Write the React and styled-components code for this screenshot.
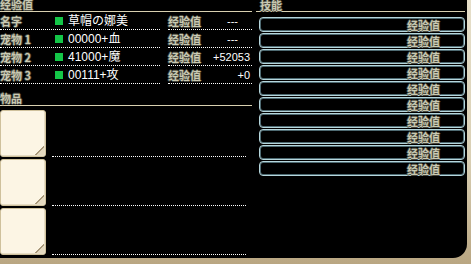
import styled, { createGlobalStyle } from "styled-components";

const GlobalStyle = createGlobalStyle`
  html, body {
    margin: 0;
    padding: 0;
    background: #000;
  }
  body {
    width: 471px;
    height: 264px;
    overflow: hidden;
  }
`;

const Frame = styled.div`
  width: 471px;
  height: 264px;
  box-sizing: border-box;
  padding: 0 4px 6px 0;
  background: linear-gradient(to bottom, #e6dfca 0%, #d9cfb4 60%, #b9a682 100%);
`;

const Panel = styled.div`
  height: 100%;
  background: #000;
  border-bottom-right-radius: 14px;
  display: grid;
  grid-template-columns: 252px 209px;
  column-gap: 4px;
  overflow: hidden;
`;

const Column = styled.div`
  display: flex;
  flex-direction: column;
`;

const labelFont = `
  font-family: "Noto Sans CJK SC", "Noto Sans", sans-serif;
  font-weight: bold;
  font-size: 11px;
  color: #c9c9b2;
  text-shadow: 1px 0 #45453c, -1px 0 #45453c, 0 1px #45453c, 0 -1px #45453c;
`;

const SectionHeader = styled.div`
  ${labelFont}
  box-sizing: border-box;
  height: ${(p) => p.$h || 12}px;
  padding-left: ${(p) => p.$indent || 0}px;
  border-bottom: 1px solid #d8d0b0;
  display: flex;
  align-items: flex-end;
  overflow: ${(p) => (p.$clip ? "hidden" : "visible")};
  line-height: ${(p) => p.$lh || 11}px;
`;

const InfoRow = styled.div`
  display: grid;
  grid-template-columns: 160px 84px;
  column-gap: 8px;
  height: 18px;
`;

const Cell = styled.div`
  display: flex;
  align-items: center;
  border-bottom: 1px dotted #fff;
  justify-content: ${(p) => (p.$spread ? "space-between" : "flex-start")};
`;

const Label = styled.span`
  ${labelFont}
  width: ${(p) => (p.$w ? `${p.$w}px` : "auto")};
  flex-shrink: 0;
  line-height: 14px;
`;

const Square = styled.span`
  width: 8px;
  height: 8px;
  background: #14c648;
  margin-right: 5px;
  flex-shrink: 0;
`;

const Value = styled.span`
  font-family: "Liberation Sans", "Noto Sans CJK SC", sans-serif;
  font-size: ${(p) => p.$size || 12}px;
  color: #fff;
  line-height: 14px;
  padding-right: ${(p) => p.$pad || 0}px;
  white-space: nowrap;
`;

const ItemList = styled.div`
  display: flex;
  flex-direction: column;
  gap: 2px;
  padding-top: 4px;
`;

const ItemRow = styled.div`
  display: grid;
  grid-template-columns: 46px 194px;
  column-gap: 6px;
  height: 47px;
`;

const Slot = styled.div`
  position: relative;
  box-sizing: border-box;
  background: #fcf5e4;
  border: 1px solid #cfc19c;
  border-radius: 3px;
  box-shadow: inset -1px -1px 0 #e6dcc4;

  &::after {
    content: "";
    position: absolute;
    right: 1px;
    bottom: 1px;
    width: 9px;
    height: 9px;
    background: linear-gradient(
      to top left,
      #e4d9bf 0 42%,
      #a8987a 42% 54%,
      transparent 54%
    );
  }
`;

const ItemLine = styled.div`
  align-self: end;
  border-bottom: 1px dotted #fff;
`;

const SkillList = styled.div`
  display: flex;
  flex-direction: column;
  gap: 1px;
  margin: 5px 0 0 3px;
  width: 206px;
`;

const SkillBox = styled.div`
  box-sizing: border-box;
  height: 15px;
  border: 1px solid #b6d6dc;
  border-radius: 4px;
  box-shadow: inset 0 0 0 1px #4e6a72;
  display: flex;
  align-items: center;
  justify-content: flex-end;
  padding-right: 24px;
`;

const SkillLabel = styled.span`
  ${labelFont}
  line-height: 12px;
`;

const pets = [
  { label: "名字", value: "草帽の娜美", exp: "---", pad: 14 },
  { label: "宠物 1", value: "00000+血", exp: "---", pad: 14 },
  { label: "宠物 2", value: "41000+魔", exp: "+52053", pad: 2 },
  { label: "宠物 3", value: "00111+攻", exp: "+0", pad: 2 },
];

const App = () => {
  return (
    <>
      <GlobalStyle />
      <Frame>
        <Panel>
          <Column>
            <SectionHeader $clip $lh={13}>
              经验值
            </SectionHeader>
            {pets.map((p) => (
              <InfoRow key={p.label}>
                <Cell>
                  <Label $w={55}>{p.label}</Label>
                  <Square />
                  <Value>{p.value}</Value>
                </Cell>
                <Cell $spread>
                  <Label>经验值</Label>
                  <Value $size={11} $pad={p.pad}>
                    {p.exp}
                  </Value>
                </Cell>
              </InfoRow>
            ))}
            <SectionHeader $h={22} $lh={13}>
              物品
            </SectionHeader>
            <ItemList>
              {[0, 1, 2].map((i) => (
                <ItemRow key={i}>
                  <Slot />
                  <ItemLine />
                </ItemRow>
              ))}
            </ItemList>
          </Column>
          <Column>
            <SectionHeader $indent={4} $lh={11}>
              技能
            </SectionHeader>
            <SkillList>
              {Array.from({ length: 10 }).map((_, i) => (
                <SkillBox key={i}>
                  <SkillLabel>经验值</SkillLabel>
                </SkillBox>
              ))}
            </SkillList>
          </Column>
        </Panel>
      </Frame>
    </>
  );
};

export default App;
